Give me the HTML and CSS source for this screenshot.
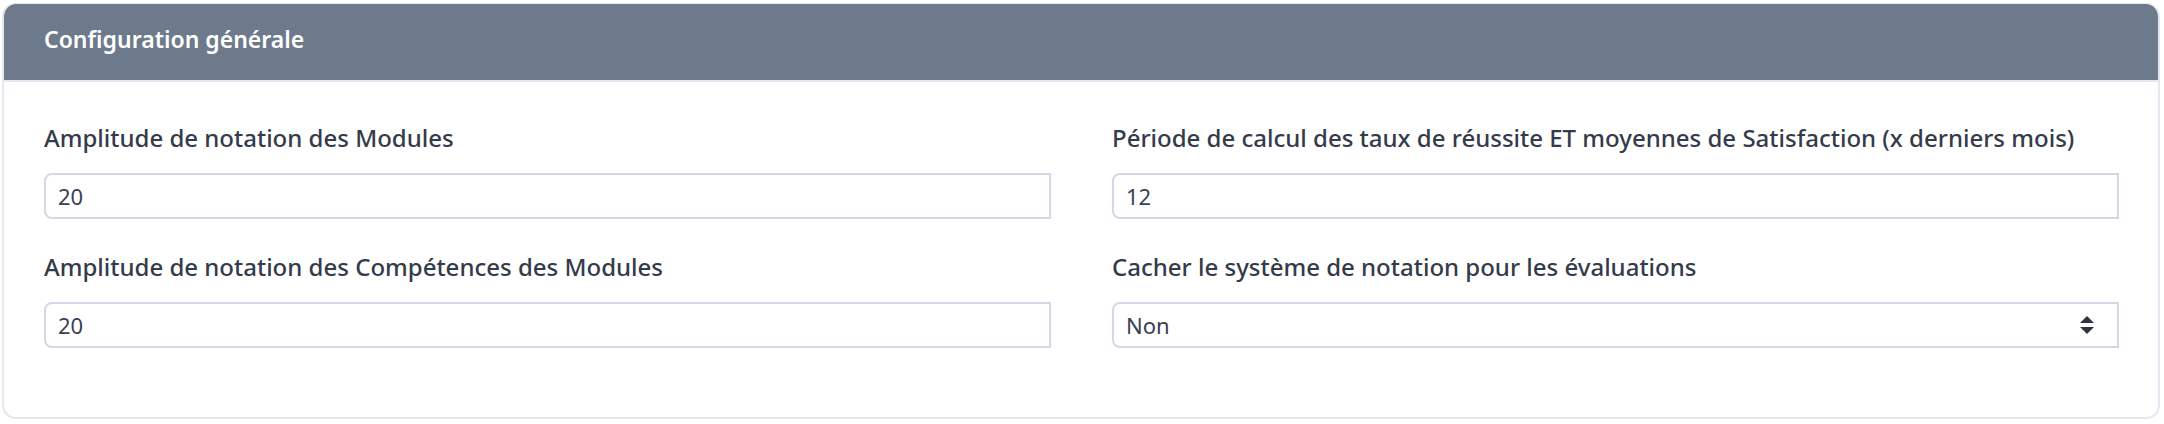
FILE: index.html
```html
<!DOCTYPE html>
<html lang="fr">
<head>
<meta charset="utf-8">
<title>Configuration générale</title>
<link rel="stylesheet" href="styles.css">
</head>
<body>
<section class="card">
  <header class="card-header">
    <h2 class="card-title">Configuration générale</h2>
  </header>
  <div class="card-body">
    <div class="field">
      <label class="label">Amplitude de notation des Modules</label>
      <input class="control" type="text" value="20">
    </div>
    <div class="field">
      <label class="label">Période de calcul des taux de réussite ET moyennes de Satisfaction (x derniers mois)</label>
      <input class="control" type="text" value="12">
    </div>
    <div class="field">
      <label class="label">Amplitude de notation des Compétences des Modules</label>
      <input class="control" type="text" value="20">
    </div>
    <div class="field">
      <label class="label">Cacher le système de notation pour les évaluations</label>
      <div class="select">
        <span class="select-value">Non</span>
        <svg class="select-arrows" width="16" height="20" viewBox="0 0 16 20"><path d="M8 1 L15 8 H1 Z" fill="#2d3340"/><path d="M1 12 H15 L8 19 Z" fill="#2d3340"/></svg>
      </div>
    </div>
  </div>
</section>
</body>
</html>
```

FILE: styles.css
```css
html, body {
  margin: 0;
  background: #ffffff;
}
body {
  padding: 3px 4px 5px 2px;
  font-family: "Noto Sans", "Open Sans", sans-serif;
  color: #343b4b;
}
.card {
  border: 2px solid #e3e7ef;
  border-top-width: 1px;
  border-radius: 14px;
  overflow: hidden;
  background: #ffffff;
}
.card-header {
  background: #6d7a8b;
  padding: 20px 40px 0;
  height: 56px;
  border-bottom: 2px solid #e3e7ef;
}
.card-title {
  margin: 0;
  color: #ffffff;
  font-size: 23px;
  font-weight: 650;
  line-height: 30px;
}
.card-body {
  display: grid;
  grid-template-columns: 1fr 1fr;
  column-gap: 61px;
  row-gap: 32px;
  padding: 40px 39px 69px 40px;
}
.field {
  display: flex;
  flex-direction: column;
}
.label {
  font-size: 24px;
  font-weight: 500;
  line-height: 32px;
  margin-bottom: 19px;
  color: #343b4b;
}
.control, .select {
  box-sizing: border-box;
  height: 46px;
  width: 100%;
  border: 2px solid #d3d9e4;
  border-radius: 8px 0 0 8px;
  padding: 0 12px;
  font-family: "Noto Sans", "Open Sans", sans-serif;
  font-size: 22px;
  color: #3a4151;
  background: #ffffff;
  outline: none;
}
.select {
  display: flex;
  align-items: center;
  justify-content: space-between;
  padding-right: 22px;
}
.select-arrows {
  display: block;
}
```
